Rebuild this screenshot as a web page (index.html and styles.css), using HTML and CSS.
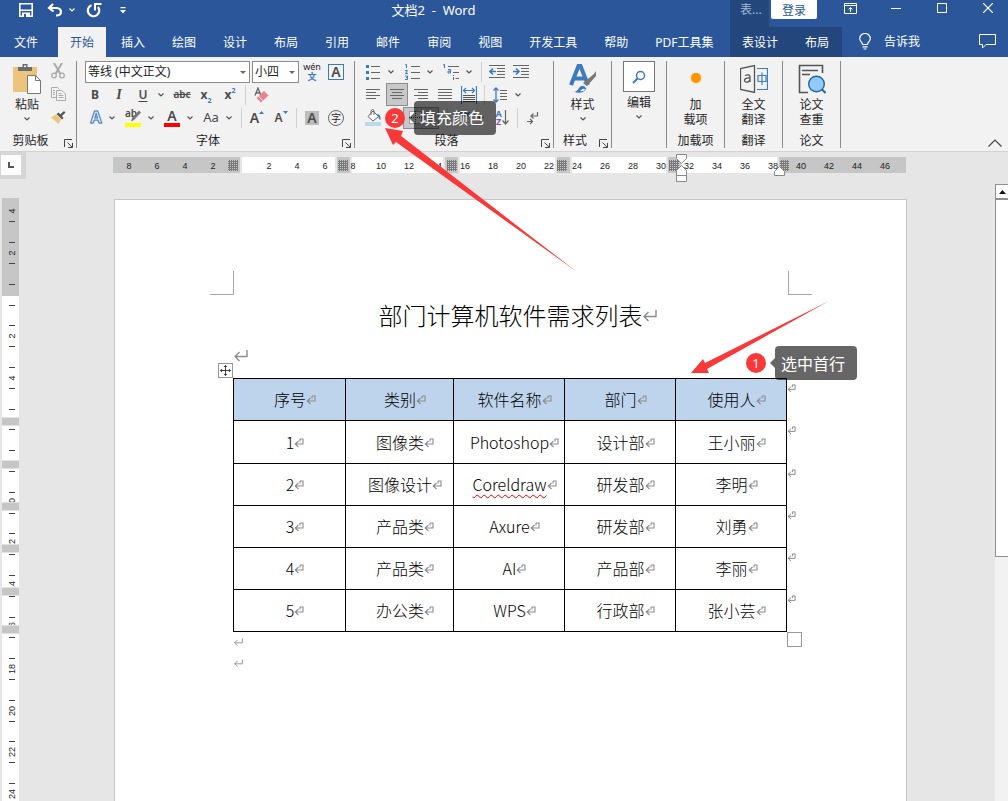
FILE: index.html
```html
<!DOCTYPE html>
<html lang="zh-CN">
<head>
<meta charset="utf-8">
<meta name="viewport" content="width=device-width, initial-scale=1">
<title>文档2 - Word</title>
<link rel="stylesheet" href="styles.css">
</head>
<body>
<svg class="defs" aria-hidden="true">
  <symbol id="caret" viewBox="0 0 6 4"><path d="M.5.5 3 3 5.5.5" fill="none" stroke="currentColor" stroke-width="1.2"/></symbol>
  <symbol id="launcher" viewBox="0 0 9 9"><path d="M.5 8V.5H8M3.500 3.500 8 8M8.500 4v4.500H4" fill="none" stroke="#444"/></symbol>
  <symbol id="para" viewBox="0 0 14 12"><path d="M13 0v6.500H1M5.500 2 1 6.500 5.500 11" fill="none" stroke="#8c8c8c" stroke-width="1.400"/></symbol>
  <symbol id="cell" viewBox="0 0 10 10"><path d="M6 1h3v5H1M4.500 3 1.200 6l3.300 3M6 1v2.500" fill="none" stroke="#8c8c8c" stroke-width="1.100"/></symbol>
</svg>

<header class="titlebar">
  <div class="quick">
    <button class="quick-btn" aria-label="保存"><svg width="16" height="16" viewBox="0 0 16 16"><path d="M1.800 1.800h12.400v12.400H1.800z" fill="none" stroke="#fff" stroke-width="1.600"/><path d="M2 7.500h12v1.500H2zM4 10.500h8V15H4z" fill="#fff"/><path d="M6 12h2v3H6z" fill="#2b579a"/></svg></button>
    <button class="quick-btn undo" aria-label="撤销"><svg width="16" height="14" viewBox="0 0 16 14"><path d="M6 1 2 5l4.500 3.500M2 5h7.500c6 .5 6 7.500-.5 7.500" fill="none" stroke="#fff" stroke-width="2.200"/></svg></button>
    <button class="quick-caret" aria-label="撤销选项"><svg width="6" height="4"><use href="#caret"/></svg></button>
    <button class="quick-btn redo" aria-label="重复"><svg width="16" height="15" viewBox="0 0 16 15"><path d="M5.500 2.200A5.700 5.700 0 1 0 12 4" fill="none" stroke="#fff" stroke-width="2.200"/><path d="M9 7.500V1h6.500" fill="none" stroke="#fff" stroke-width="2"/></svg></button>
    <button class="quick-caret more" aria-label="自定义快速访问工具栏"><svg width="6" height="7" viewBox="0 0 6 7"><path d="M.5 0h5v1.300h-5zM0 3h6L3 6.500z" fill="#fff"/></svg></button>
  </div>
  <h1 class="window-title">文档2  -  Word</h1>
  <div class="title-right">
    <span class="context-title">表...</span>
    <button class="login">登录</button>
    <div class="window-controls">
      <button aria-label="功能区显示选项"><svg width="13" height="11" viewBox="0 0 13 11"><path d="M.5.5h12v10H.5zM.5 2.500h12M6.500 9V4.500M4.500 6.500l2-2 2 2" fill="none" stroke="#fff"/></svg></button>
      <button aria-label="最小化"><svg width="10" height="11" viewBox="0 0 10 11"><path d="M0 5.500h10" stroke="#fff"/></svg></button>
      <button aria-label="最大化"><svg width="10" height="10" viewBox="0 0 10 10"><path d="M.5.5h9v9h-9z" fill="none" stroke="#fff"/></svg></button>
      <button aria-label="关闭"><svg width="10" height="10" viewBox="0 0 10 10"><path d="m0 0 10 10M10 0 0 10" stroke="#fff" stroke-width="1.200"/></svg></button>
    </div>
  </div>
</header>

<nav class="tabs">
  <div class="tab-list">
    <button class="tab file">文件</button>
    <button class="tab active">开始</button>
    <button class="tab">插入</button>
    <button class="tab">绘图</button>
    <button class="tab">设计</button>
    <button class="tab">布局</button>
    <button class="tab">引用</button>
    <button class="tab">邮件</button>
    <button class="tab">审阅</button>
    <button class="tab">视图</button>
    <button class="tab">开发工具</button>
    <button class="tab">帮助</button>
    <button class="tab">PDF工具集</button>
  </div>
  <div class="tabs-right">
    <div class="context-tabs">
      <button class="tab">表设计</button>
      <button class="tab">布局</button>
    </div>
    <button class="tell-me"><svg width="12" height="17" viewBox="0 0 12 17"><path d="M3.500 11.500C3.500 9 .7 8.500.7 5.500a5.300 5 0 0 1 10.600 0c0 3-2.800 3.500-2.800 6zM3.500 13.800h5M4.500 16h3" fill="none" stroke="#fff" stroke-width="1.200"/></svg>告诉我</button>
    <button class="comment" aria-label="批注"><svg width="17" height="15" viewBox="0 0 17 15"><path d="M.5.5h16v10H7L3.500 14v-3.500h-3z" fill="none" stroke="#fff"/></svg></button>
  </div>
</nav>

<section class="ribbon" aria-label="功能区">
  <div class="group clipboard">
    <div class="group-body">
      <button class="big"><span class="big-icon"><svg width="28" height="30" viewBox="0 0 28 30"><path d="M0 3h24v25H0z" fill="#ecc47c"/><path d="M5 7V3h4.500V0h5v3H19v4z" fill="#6d6d6d"/><path d="M11 1.500h2V3h-2z" fill="#fff"/><path d="M14.500 11.500h8l5 5v13h-13z" fill="#fff" stroke="#777"/><path d="M22.500 11.500v5h5" fill="none" stroke="#777"/></svg></span>粘贴<span class="line"><svg width="6" height="4"><use href="#caret"/></svg></span></button>
      <div class="stack">
        <button class="tool" aria-label="剪切"><svg width="14" height="16" viewBox="0 0 14 16"><path d="m3 0 6.500 11M11 0 4.500 11" stroke="#aaa" stroke-width="2"/><circle cx="3" cy="12.500" r="2.300" fill="none" stroke="#aaa" stroke-width="1.300"/><circle cx="11" cy="12.500" r="2.300" fill="none" stroke="#aaa" stroke-width="1.300"/></svg></button>
        <button class="tool" aria-label="复制"><svg width="15" height="14" viewBox="0 0 15 14"><path d="M5 10.500H.5V.5h6l2 2M6 3.500h5l3.500 3.500v6.500H5.500v-10zM2 3.500h2M2 5.500h2M2 7.500h2M7.500 6.500h3M7.500 8.500h5M7.500 10.500h5" fill="none" stroke="#aaa"/></svg></button>
        <button class="tool" aria-label="格式刷"><svg width="16" height="14" viewBox="0 0 16 14"><path d="M1 7.500 6 4.500l5 5L8.500 14z" fill="#ecc47c"/><path d="m6.500 4 2-1.500L13.500 8 12 9.500z" fill="#555"/><path d="m10 4.500 4-3.500 1.500 1.500-4 4z" fill="#555"/></svg></button>
      </div>
    </div>
    <div class="group-foot"><span>剪贴板</span><button aria-label="剪贴板选项"><svg width="9" height="9"><use href="#launcher"/></svg></button></div>
  </div>

  <div class="group font">
    <div class="group-body rows">
      <div class="row fields">
        <label class="field name"><select aria-label="字体"><option>等线 (中文正文)</option></select></label>
        <label class="field size"><select aria-label="字号"><option>小四</option></select></label>
        <button class="tool" aria-label="拼音指南"><span class="pinyin"><span>wén</span><b>文</b></span></button>
        <button class="tool" aria-label="字符边框"><span class="char-border">A</span></button>
      </div>
      <div class="row">
        <button class="tool glyph bold">B</button>
        <button class="tool glyph italic">I</button>
        <button class="tool glyph under">U</button>
        <button class="drop" aria-label="下划线选项"><svg width="6" height="4"><use href="#caret"/></svg></button>
        <button class="tool glyph strike">abc</button>
        <button class="tool glyph script">x<sub>2</sub></button>
        <button class="tool glyph script">x<sup>2</sup></button>
        <i class="sep"></i>
        <button class="tool" aria-label="清除格式"><svg width="15" height="16" viewBox="0 0 15 16"><path d="M1 8.500 4 1l3 7.500M2 6h4" fill="none" stroke="#666" stroke-width="1.300"/><path d="m2.500 11 7.500-7 4.500 4.500-7.500 7z" fill="#e6838f"/><path d="m4.500 9.200 4.300 4.500" stroke="#f3f2f3"/></svg></button>
      </div>
      <div class="row row-effects">
        <button class="tool narrow glyph effect">A</button>
        <button class="drop" aria-label="文本效果选项"><svg width="6" height="4"><use href="#caret"/></svg></button>
        <button class="tool glyph highlight" aria-label="突出显示"><span>ab</span><svg width="17" height="12" viewBox="0 0 17 12"><path d="M6 11.500 7 8l7-7.500 2 2L9 10z" fill="#777"/></svg></button>
        <button class="drop" aria-label="突出显示选项"><svg width="6" height="4"><use href="#caret"/></svg></button>
        <button class="tool glyph color">A</button>
        <button class="drop" aria-label="字体颜色选项"><svg width="6" height="4"><use href="#caret"/></svg></button>
        <button class="tool glyph case">Aa</button>
        <button class="drop" aria-label="更改大小写选项"><svg width="6" height="4"><use href="#caret"/></svg></button>
        <i class="sep"></i>
        <button class="tool glyph grow">A<svg width="5" height="3" viewBox="0 0 5 3"><path d="M0 3h5L2.500 0z" fill="#3b7bbd"/></svg></button>
        <button class="tool glyph shrink">A<svg width="5" height="3" viewBox="0 0 5 3"><path d="M0 0h5L2.500 3z" fill="#3b7bbd"/></svg></button>
        <i class="sep"></i>
        <button class="tool"><span class="shade">A</span></button>
        <button class="tool"><span class="circled">字</span></button>
      </div>
    </div>
    <div class="group-foot"><span>字体</span><button aria-label="字体选项"><svg width="9" height="9"><use href="#launcher"/></svg></button></div>
  </div>

  <div class="group paragraph">
    <div class="group-body rows">
      <div class="row">
        <button class="tool" aria-label="项目符号"><svg width="14" height="16" viewBox="0 0 14 16"><path d="M0 1h3v3H0zM0 7h3v3H0zM0 13h3v3H0z" fill="#3b7bbd"/><path d="M5 2.500h9M5 8.500h9M5 14.500h9" stroke="#666"/></svg></button>
        <button class="drop" aria-label="项目符号选项"><svg width="6" height="4"><use href="#caret"/></svg></button>
        <button class="tool" aria-label="编号"><svg width="15" height="16" viewBox="0 0 15 16"><path d="M0 1l1.500-.5V4M0 6.500h2.500L.5 9.500h2.500M0 12h2.500v3.500H0M1 13.700h1" fill="none" stroke="#3b7bbd"/><path d="M6 2.500h9M6 8.500h9M6 14.500h9" stroke="#666"/></svg></button>
        <button class="drop" aria-label="编号选项"><svg width="6" height="4"><use href="#caret"/></svg></button>
        <button class="tool" aria-label="多级列表"><svg width="18" height="16" viewBox="0 0 18 16"><path d="M1 1l1.500-.5V4M6 5.500h2.500V9H6V7.200h2.500M11.500 11v1M11.500 13v3" fill="none" stroke="#3b7bbd"/><path d="M6 2.500h11M11 8.500h6M13.500 14.500H17" stroke="#666"/></svg></button>
        <button class="drop" aria-label="多级列表选项"><svg width="6" height="4"><use href="#caret"/></svg></button>
        <i class="sep"></i>
        <button class="tool" aria-label="减少缩进量"><svg width="16" height="13" viewBox="0 0 16 13"><path d="M0 .5h16M8 3.500h8M8 6.500h8M8 9.500h8M0 12.500h16" stroke="#666"/><path d="M7 6.500H1M4 3.500l-3 3 3 3" fill="none" stroke="#3b7bbd" stroke-width="1.600"/></svg></button>
        <button class="tool" aria-label="增加缩进量"><svg width="16" height="13" viewBox="0 0 16 13"><path d="M0 .5h16M8 3.500h8M8 6.500h8M8 9.500h8M0 12.500h16" stroke="#666"/><path d="M0 6.500h6M3 3.500l3 3-3 3" fill="none" stroke="#3b7bbd" stroke-width="1.600"/></svg></button>
      </div>
      <div class="row">
        <button class="tool" aria-label="左对齐"><svg width="14" height="11" viewBox="0 0 14 11"><path d="M0 .5h14M0 3.500h10M0 6.500h14M0 9.500h10" stroke="#666"/></svg></button>
        <button class="tool selected" aria-label="居中"><svg width="14" height="11" viewBox="0 0 14 11"><path d="M0 .5h14M2 3.500h10M0 6.500h14M2 9.500h10" stroke="#666"/></svg></button>
        <button class="tool" aria-label="右对齐"><svg width="14" height="11" viewBox="0 0 14 11"><path d="M0 .5h14M4 3.500h10M0 6.500h14M4 9.500h10" stroke="#666"/></svg></button>
        <button class="tool" aria-label="两端对齐"><svg width="14" height="11" viewBox="0 0 14 11"><path d="M0 .5h14M0 3.500h14M0 6.500h14M0 9.500h14" stroke="#666"/></svg></button>
        <button class="tool" aria-label="分散对齐"><svg width="16" height="18" viewBox="0 0 16 18"><path d="M.5 0v18M15.500 0v18M2.500 4.500h11M5 2 2.500 4.500 5 7M11 2l2.500 2.500L11 7" fill="none" stroke="#3b7bbd" stroke-width="1.200"/><path d="M2 9.500h12M2 11.500h12M2 13.500h12M2 15.500h12" stroke="#555"/></svg></button>
        <i class="sep"></i>
        <button class="tool" aria-label="行距"><svg width="15" height="16" viewBox="0 0 15 16"><path d="M3 1v14M.5 3.500 3 1l2.500 2.500M.5 12.500 3 15l2.500-2.500" fill="none" stroke="#3b7bbd" stroke-width="1.300"/><path d="M7 3.500h7M7 6.500h7M7 9.500h7M7 12.500h7" stroke="#666"/></svg></button>
        <button class="drop" aria-label="行距选项"><svg width="6" height="4"><use href="#caret"/></svg></button>
      </div>
      <div class="row">
        <button class="tool" aria-label="底纹"><svg width="17" height="18" viewBox="0 0 17 18"><path d="M0 13h16v4H0z" fill="#bdd7ee"/><path d="m8 2 5.500 5.500-5.500 4.500L3 7.500zM6 6V1.500Q8-.5 9 1.500V6" fill="#fff" stroke="#666"/><path d="M12 5q4 0 3.500 6-2-1-2.500-4z" fill="#3b7bbd"/></svg></button>
        <button class="drop" aria-label="底纹选项"><svg width="6" height="4"><use href="#caret"/></svg></button>
        <div class="split">
          <button class="tool" aria-label="边框"><svg width="13" height="13" viewBox="0 0 13 13"><path d="M0 0h13v13H0z" fill="#fff"/><path d="M.5.5h12v12H.5zM6.500 0v13M0 6.500h13" fill="none" stroke="#444" stroke-dasharray="1 1"/></svg></button>
          <button class="drop" aria-label="边框选项"><svg width="6" height="4"><use href="#caret"/></svg></button>
        </div>
        <i class="sep"></i>
        <button class="tool" aria-label="中文版式"><svg width="16" height="14" viewBox="0 0 16 14"><path d="M1 1.500h6M1 4.500h6M9 1l6 5M15 1 9 6" fill="none" stroke="#3b7bbd" stroke-width="1.400"/></svg></button>
        <button class="drop" aria-label="中文版式选项"><svg width="6" height="4"><use href="#caret"/></svg></button>
        <button class="tool" aria-label="排序"><span class="sort"><b>A</b><b>Z</b></span><svg width="7" height="15" viewBox="0 0 7 15"><path d="M3.500 0v14M.5 10.500l3 3.500 3-3.500" fill="none" stroke="#666" stroke-width="1.200"/></svg></button>
        <i class="sep"></i>
        <button class="tool" aria-label="显示编辑标记"><svg width="12" height="14" viewBox="0 0 12 14"><path d="M10.500 1v4H4M6.500 2.500 4 5l2.500 2.500M0 10.500h5.500M3 8l2.500 2.500L3 13" fill="none" stroke="#666" stroke-width="1.200"/></svg></button>
      </div>
    </div>
    <div class="group-foot"><span>段落</span><button aria-label="段落选项"><svg width="9" height="9"><use href="#launcher"/></svg></button></div>
    <svg class="arrow arrow-fill" width="194" height="146" viewBox="0 0 194 146" aria-hidden="true"><path d="m1 0 18 3-2 5 176 136L12 14l-3 3z" fill="#f93939"/></svg>
    <span class="badge badge-fill">2</span>
    <div class="tip tip-fill">填充颜色</div>
  </div>

  <div class="group">
    <div class="group-body">
      <button class="big"><span class="big-icon"><svg width="28" height="30" viewBox="0 0 28 30"><path d="M2 21 9.500 2h2L19 21M5 14.500h11" fill="none" stroke="#3b7bbd" stroke-width="4"/><path d="m14 19 11-9 2-3v5l-9 10z" fill="#777"/><path d="M4 28q5-1 6-5 3-3 6-1 3 3 0 5-4 4-12 1z" fill="#3b7bbd" stroke="#f3f2f3"/><path d="M11 27q3-3 5-2-1 3-5 2z" fill="#fff"/></svg></span>样式<span class="line"><svg width="6" height="4"><use href="#caret"/></svg></span></button>
    </div>
    <div class="group-foot"><span>样式</span><button aria-label="样式选项"><svg width="9" height="9"><use href="#launcher"/></svg></button></div>
  </div>

  <div class="group edit">
    <div class="group-body">
      <button class="big"><span class="edit-box"><svg width="14" height="14" viewBox="0 0 14 14"><circle cx="8.500" cy="5.500" r="4" fill="none" stroke="#3b7bbd" stroke-width="1.500"/><path d="M5.500 8.500 1 13" stroke="#3b7bbd" stroke-width="2"/></svg></span>编辑<span class="line"><svg width="6" height="4"><use href="#caret"/></svg></span></button>
    </div>
  </div>

  <div class="group plain">
    <div class="group-body">
      <button class="big"><span class="big-icon dot-icon"><i class="dot"></i></span>加<br>载项</button>
    </div>
    <div class="group-foot"><span>加载项</span></div>
  </div>

  <div class="group plain">
    <div class="group-body">
      <button class="big"><span class="big-icon"><svg width="28" height="28" viewBox="0 0 28 28"><path d="M14.500.5.5 3.500v21l14 3zM5 10.500q5-2 5 1.500v5M10 13q-5-.5-5.500 2 0 2.500 3 2 2.500-.5 2.500-3" fill="none" stroke="#555" stroke-width="1.300"/><path d="M17 3.500h10.500v21H17M18 10.500h8v6h-8zM22 7.500V20" fill="none" stroke="#3b7bd0" stroke-width="1.200"/></svg></span>全文<br>翻译</button>
    </div>
    <div class="group-foot"><span>翻译</span></div>
  </div>

  <div class="group plain">
    <div class="group-body">
      <button class="big"><span class="big-icon"><svg width="29" height="30" viewBox="0 0 29 30"><path d="M25.500 9V1.500H2.500v27H11M5 6.500h16M5 10.500h8" fill="none" stroke="#555" stroke-width="1.600"/><circle cx="19.500" cy="20" r="7.800" fill="#93c8f8" stroke="#1d6b9d" stroke-width="1.400"/><path d="m25 25.500 3.500 3.500" stroke="#1d6b9d" stroke-width="2"/></svg></span>论文<br>查重</button>
    </div>
    <div class="group-foot"><span>论文</span></div>
  </div>

  <button class="collapse" aria-label="折叠功能区"><svg width="14" height="8" viewBox="0 0 14 8"><path d="m.5 7.500 6.500-6.500 6.500 6.500" fill="none" stroke="#444" stroke-width="1.200"/></svg></button>
</section>

<main class="workspace">
  <div class="left-rail">
    <div class="corner"><button aria-label="制表符"><svg width="6" height="6" viewBox="0 0 6 6"><path d="M1 0v5h5" fill="none" stroke="#555" stroke-width="2"/></svg></button></div>
    <svg class="ruler-v" width="17" height="640" viewBox="2 198 17 640" aria-hidden="true">
      <path d="M2 198h17v640H2z" fill="#fff"/>
      <path d="M2 198h17v98H2z" fill="#c6c6c6"/>
      <path d="M9 221.500h6M9 242.500h6M9 263.500h6M9 284.500h6M9 305.500h6M9 325.500h6M9 346.500h6M9 367.500h6M9 388.500h6M9 409.500h6M9 429.500h6M9 450.500h6M9 471.500h6M9 492.500h6M9 513.500h6M9 533.500h6M9 554.500h6M9 575.500h6M9 596.500h6M9 617.500h6M9 637.500h6M9 658.500h6M9 679.500h6M9 700.500h6M9 721.500h6M9 741.500h6M9 762.500h6M9 783.500h6" stroke="#444"/>
      <g class="ruler-text">
        <text transform="translate(15 211) rotate(-90)">4</text>
        <text transform="translate(15 253) rotate(-90)">2</text>
        <text transform="translate(15 336) rotate(-90)">2</text>
        <text transform="translate(15 378) rotate(-90)">4</text>
        <text transform="translate(15 462) rotate(-90)">8</text>
        <text transform="translate(15 503) rotate(-90)">10</text>
        <text transform="translate(15 544) rotate(-90)">12</text>
        <text transform="translate(15 586) rotate(-90)">14</text>
        <text transform="translate(15 627) rotate(-90)">16</text>
        <text transform="translate(15 669) rotate(-90)">18</text>
        <text transform="translate(15 711) rotate(-90)">20</text>
        <text transform="translate(15 752) rotate(-90)">22</text>
        <text transform="translate(15 794) rotate(-90)">24</text>
      </g>
      <path d="M2 421.500h17M2 464.500h17M2 506.500h17M2 548.500h17M2 591.500h17M2 629.500h17" stroke="#e2e2e2" stroke-width="9"/>
      <path d="M2 421.500h17M2 464.500h17M2 506.500h17M2 548.500h17M2 591.500h17M2 629.500h17" stroke="#c6c6c6" stroke-width="7"/>
    </svg>
  </div>

  <div class="canvas">
    <svg class="ruler-h" width="793" height="42" viewBox="114 157 793 42" aria-hidden="true">
      <defs><pattern id="mesh" width="2" height="2" patternUnits="userSpaceOnUse"><path d="M0 0h2v2H0z" fill="#777"/><path d="M0 0h1v1H0z" fill="#ccc"/></pattern></defs>
      <path d="M113 157h127v16H113zM337 157h13v16h-13zM445 157h13v16h-13zM557 157h13v16h-13zM668 157h13v16h-13zM779 157h127v16H779z" fill="#c6c6c6"/>
      <path d="M242 157h93v16h-93zM352 157h91v16h-91zM460 157h95v16h-95zM572 157h94v16h-94zM681 157h96v16h-96z" fill="#fff"/>
      <path d="M228 160h10v11h-10zM338 160h10v11h-10zM447 160h10v11h-10zM557 160h10v11h-10zM669 160h10v11h-10zM780 160h9v11h-9z" fill="url(#mesh)"/>
      <g class="ruler-text">
        <text x="129" y="169">8</text><text x="157" y="169">6</text><text x="185" y="169">4</text><text x="213" y="169">2</text>
        <text x="269" y="169">2</text><text x="297" y="169">4</text><text x="325" y="169">6</text><text x="353" y="169">8</text>
        <text x="381" y="169">10</text><text x="409" y="169">12</text><text x="437" y="169">14</text><text x="465" y="169">16</text>
        <text x="493" y="169">18</text><text x="521" y="169">20</text><text x="549" y="169">22</text><text x="577" y="169">24</text>
        <text x="605" y="169">26</text><text x="633" y="169">28</text><text x="661" y="169">30</text><text x="689" y="169">32</text>
        <text x="717" y="169">34</text><text x="745" y="169">36</text><text x="773" y="169">38</text><text x="801" y="169">40</text>
        <text x="829" y="169">42</text><text x="857" y="169">44</text><text x="885" y="169">46</text>
      </g>
      <path d="M676.500 154.500h10v4l-5 5-5-5zM676.500 175.500v-5l5-5 5 5v5zM676.500 175.500h10v6h-10zM774.500 175.500v-4l5-5 5 5v4z" fill="#fff" stroke="#888"/>
    </svg>

    <article class="page">
      <div class="crop"><i></i><i></i></div>
      <h2 class="doc-title">部门计算机软件需求列表<svg class="hang" width="14" height="12"><use href="#para"/></svg></h2>
      <p class="blank"><svg width="14" height="12"><use href="#para"/></svg></p>
      <div class="table-wrap">
        <button class="handle" aria-label="移动表格"><svg width="11" height="11" viewBox="0 0 11 11"><path d="M5.500 0v11M0 5.500h11M4 2l1.500-1.500L7 2M4 9l1.500 1.500L7 9M2 4 .5 5.500 2 7M9 4l1.500 1.500L9 7" fill="none" stroke="#444"/></svg></button>
        <table>
          <colgroup><col class="c1"><col class="c2"><col class="c3"><col class="c3"><col class="c3"></colgroup>
          <thead>
            <tr><th>序号<svg class="hang"><use href="#cell"/></svg></th><th>类别<svg class="hang"><use href="#cell"/></svg></th><th>软件名称<svg class="hang"><use href="#cell"/></svg></th><th>部门<svg class="hang"><use href="#cell"/></svg></th><th>使用人<svg class="hang"><use href="#cell"/></svg><svg class="row-end"><use href="#cell"/></svg></th></tr>
          </thead>
          <tbody>
            <tr class="first"><td>1<svg class="hang"><use href="#cell"/></svg></td><td>图像类<svg class="hang"><use href="#cell"/></svg></td><td>Photoshop<svg class="hang"><use href="#cell"/></svg></td><td>设计部<svg class="hang"><use href="#cell"/></svg></td><td>王小丽<svg class="hang"><use href="#cell"/></svg><svg class="row-end"><use href="#cell"/></svg></td></tr>
            <tr><td>2<svg class="hang"><use href="#cell"/></svg></td><td>图像设计<svg class="hang"><use href="#cell"/></svg></td><td><span class="typo">Coreldraw</span><svg class="hang"><use href="#cell"/></svg></td><td>研发部<svg class="hang"><use href="#cell"/></svg></td><td>李明<svg class="hang"><use href="#cell"/></svg><svg class="row-end"><use href="#cell"/></svg></td></tr>
            <tr><td>3<svg class="hang"><use href="#cell"/></svg></td><td>产品类<svg class="hang"><use href="#cell"/></svg></td><td>Axure<svg class="hang"><use href="#cell"/></svg></td><td>研发部<svg class="hang"><use href="#cell"/></svg></td><td>刘勇<svg class="hang"><use href="#cell"/></svg><svg class="row-end"><use href="#cell"/></svg></td></tr>
            <tr><td>4<svg class="hang"><use href="#cell"/></svg></td><td>产品类<svg class="hang"><use href="#cell"/></svg></td><td>AI<svg class="hang"><use href="#cell"/></svg></td><td>产品部<svg class="hang"><use href="#cell"/></svg></td><td>李丽<svg class="hang"><use href="#cell"/></svg><svg class="row-end"><use href="#cell"/></svg></td></tr>
            <tr><td>5<svg class="hang"><use href="#cell"/></svg></td><td>办公类<svg class="hang"><use href="#cell"/></svg></td><td>WPS<svg class="hang"><use href="#cell"/></svg></td><td>行政部<svg class="hang"><use href="#cell"/></svg></td><td>张小芸<svg class="hang"><use href="#cell"/></svg><svg class="row-end"><use href="#cell"/></svg></td></tr>
          </tbody>
        </table>
        <i class="resize"></i>
        <svg class="arrow arrow-row" width="140" height="74" viewBox="0 0 140 74" aria-hidden="true"><path d="M1 72 13 58l2 4L139 0 17 68l2 4z" fill="#f93939"/></svg>
        <span class="badge badge-row">1</span>
        <div class="tip tip-row">选中首行</div>
      </div>
      <p class="after"><svg width="9" height="9"><use href="#para"/></svg></p>
      <p class="after"><svg width="9" height="9"><use href="#para"/></svg></p>
    </article>
  </div>

  <div class="scroll">
    <button class="scroll-up" aria-label="向上滚动"><svg width="7" height="4" viewBox="0 0 7 4"><path d="M0 4h7L3.500 0z" fill="#111"/></svg></button>
    <div class="thumb"></div>
  </div>
</main>
</body>
</html>
```
FILE: styles.css
```css
* { box-sizing: border-box; }

body {
  margin: 0;
  height: 100vh;
  display: flex;
  flex-direction: column;
  overflow: hidden;
  font: 12px/15px "Noto Sans", "Noto Sans CJK SC", sans-serif;
  color: #262626;
  background: #e6e6e6;
}

button {
  margin: 0;
  padding: 0;
  border: 0;
  background: none;
  color: inherit;
  font: inherit;
}

svg { display: block; flex: none; }
.defs { position: absolute; width: 0; height: 0; }

/* Title bar */
.titlebar {
  flex: none;
  display: flex;
  height: 27px;
  background: #2b579a;
  color: #fff;
}
.quick {
  flex: none;
  display: flex;
  align-items: center;
  width: 137px;
  height: 20px;
  padding-left: 18px;
}
.quick-btn { width: 16px; }
.undo { margin-left: 13px; }
.redo { margin-left: 11px; }
.quick-caret { width: 6px; margin-left: 6px; }
.quick-caret.more { margin-left: 18px; }
.window-title {
  flex: 1;
  margin: 0;
  font: inherit;
  font-size: 13px;
  line-height: 20px;
  text-align: center;
  white-space: pre;
}
.title-right { flex: none; display: flex; width: 278px; }
.context-title {
  width: 39px;
  padding-left: 10px;
  line-height: 20px;
  background: #23477d;
  color: #a3b6d3;
}
.login {
  width: 46px;
  height: 19px;
  margin-left: 2px;
  border-radius: 0 0 2px 2px;
  background: #fff;
  color: #2b579a;
  line-height: 21px;
}
.window-controls {
  display: flex;
  gap: 6px;
  height: 16px;
  margin-left: auto;
}
.window-controls button {
  width: 40px;
  display: flex;
  align-items: center;
  justify-content: center;
}

/* Tabs */
.tabs {
  flex: none;
  display: flex;
  height: 30px;
  background: #2b579a;
  color: #fff;
}
.tab-list { flex: 1; display: flex; gap: 3px; padding-left: 2px; min-width: 0; }
.tab { padding: 0 12px; white-space: nowrap; }
.tab.file { margin-right: 5px; }
.tab.active { background: #f3f2f3; color: #2b579a; }
.tabs-right { flex: none; display: flex; width: 278px; }
.context-tabs { display: flex; gap: 3px; width: 112px; background: #23477d; }
.tell-me { display: flex; align-items: center; gap: 13px; margin: 0 0 2px 17px; }
.comment { margin: 0 12px 1px auto; }

/* Ribbon */
.ribbon {
  flex: none;
  display: flex;
  height: 95px;
  padding: 4px 0;
  background: #f3f2f3;
  border-bottom: 1px solid #d2d2d2;
}
.group {
  position: relative;
  flex: none;
  display: flex;
  flex-direction: column;
  width: 58px;
  height: 87px;
  border-right: 1px solid #8a8a8a;
}
.clipboard { width: 77px; }
.font { width: 278px; }
.paragraph { width: 199px; }
.edit { width: 55px; }
.group-body { display: flex; justify-content: center; height: 68px; }
.clipboard .group-body { justify-content: flex-start; padding-left: 5px; }
.group-body.rows { flex-direction: column; justify-content: flex-start; margin-top: -1px; height: 69px; }
.group-foot { display: flex; align-items: flex-end; height: 19px; padding-right: 1px; }
.group-foot span { flex: 1; padding-right: 3px; text-align: center; }
.group-foot button { width: 11px; }
.plain .group-foot { padding: 0; }
.plain .group-foot span { padding: 0; }

.big {
  display: flex;
  flex-direction: column;
  align-items: center;
  width: 44px;
  line-height: 15px;
}
.big br { display: block; }
.big-icon { display: flex; align-items: center; justify-content: center; height: 36px; padding: 0 0 1px; }
.dot-icon { padding-bottom: 3px; }
.line { display: flex; align-items: center; justify-content: center; height: 14px; color: #555; }
.edit-box {
  display: flex;
  align-items: center;
  justify-content: center;
  width: 32px;
  height: 31px;
  margin-bottom: 3px;
  border: 1px solid #777;
  background: #fff;
}
.dot { width: 10px; height: 10px; border-radius: 5px; background: #ff9500; box-shadow: 0 0 2px #ffb95c; }
.stack { display: flex; flex-direction: column; gap: 1px; margin: -1px 0 0 -3px; }

.row { display: flex; align-items: center; height: 23px; padding-left: 6px; }
.paragraph .row { padding-left: 6px; }
.row-effects { padding-left: 9px; }
.row.fields { padding-left: 8px; }
.tool {
  position: relative;
  flex: none;
  display: flex;
  align-items: center;
  justify-content: center;
  width: 24px;
  height: 22px;
}
.narrow { width: 20px; }
.drop { flex: none; display: flex; justify-content: center; width: 12px; margin-right: 3px; color: #555; }
.sep { flex: none; width: 1px; height: 20px; margin: 0 3px; background: #d0d0d0; }
.selected { margin: 0 1px; width: 22px; height: 23px; border: 1px solid #8c8c8c; background: #c8c8c8; }
.split { display: flex; align-items: center; margin: 0 5px 0 3px; border: 1px solid #8c8c8c; background: #c8c8c8; }
.split .tool { width: 22px; height: 20px; }
.split .drop { margin: 0; }

.field { position: relative; height: 22px; margin-right: 2px; }
.field.name { width: 165px; }
.field.size { width: 47px; margin-right: 1px; }
.field select {
  appearance: none;
  width: 100%;
  height: 22px;
  padding: 0 2px;
  border: 1px solid #8c8c8c;
  border-radius: 0;
  background: #fff;
  color: #222;
  font: inherit;
}
.field::after {
  content: "";
  position: absolute;
  right: 4px;
  top: 10px;
  border: 3px solid transparent;
  border-top-color: #666;
  border-bottom: 0;
}

.glyph { color: #4a4a4a; }
.bold { font-weight: 700; }
.italic { font-family: "Liberation Serif", serif; font-style: italic; font-weight: 700; font-size: 14px; }
.under { font-weight: 600; text-decoration: underline; text-underline-offset: 2px; }
.strike { font-size: 10px; font-weight: 600; text-decoration: line-through; }
.script { font-weight: 700; }
.script sub, .script sup { color: #3b7bbd; font-size: 7px; line-height: 7px; }
.script sub { align-self: flex-end; margin-bottom: 2px; }
.script sup { align-self: flex-start; margin-top: 3px; }
.pinyin { display: flex; flex-direction: column; align-items: center; gap: 1px; font-size: 9px; line-height: 9px; }
.pinyin b { color: #3b7bbd; font-size: 9px; line-height: 10px; }
.char-border {
  width: 16px;
  height: 16px;
  border: 1px solid #3b7bbd;
  font-size: 14px;
  font-weight: 600;
  line-height: 14px;
  color: #4a4a4a;
}
.effect { color: #fff; font-size: 16px; font-weight: 700; -webkit-text-stroke: 1px #3b7bbd; text-shadow: 0 0 2px #8fb8e0; }
.highlight { flex-direction: column; justify-content: flex-start; }
.highlight::after, .color::after {
  content: "";
  position: absolute;
  left: 4px;
  bottom: 2px;
  width: 16px;
  height: 4px;
  background: #ff0;
}
.highlight span { position: absolute; left: 4px; top: 0; font-size: 10px; font-weight: 600; line-height: 12px; }
.highlight svg { position: absolute; left: 4px; top: 3px; }
.color { font-size: 14px; font-weight: 600; line-height: 17px; align-items: flex-start; }
.color::after { background: #f00; }
.case { font-size: 13px; }
.grow, .shrink { font-size: 14px; font-weight: 600; }
.shrink { font-size: 12px; }
.grow svg, .shrink svg { align-self: flex-start; margin-top: 4px; }
.shade { width: 14px; background: #bdbdbd; font-size: 14px; font-weight: 600; line-height: 14px; color: #4a4a4a; }
.circled { width: 16px; height: 16px; border: 1px solid #666; border-radius: 8px; font-size: 10px; line-height: 14px; }
.sort { display: flex; flex-direction: column; font-size: 9px; line-height: 8px; color: #3b7bbd; }
.sort b + b { color: #8b4fb0; }
.collapse { align-self: flex-end; margin: 0 6px 0 auto; }

/* Callouts */
.arrow, .badge, .tip { position: absolute; z-index: 2; }
.badge {
  width: 20px;
  height: 20px;
  border-radius: 10px;
  background: #f93939;
  color: #fff;
  font-family: "Noto Sans", sans-serif;
  font-size: 13px;
  font-weight: 400;
  line-height: 20px;
  text-align: center;
}
.tip {
  padding: 0 6px;
  border-radius: 4px;
  background: rgba(0, 0, 0, .6);
  color: #fff;
  font-size: 16px;
  font-weight: 400;
  line-height: 34px;
  white-space: nowrap;
  width: 82px;
}
.tip::before {
  content: "";
  position: absolute;
  left: -5px;
  top: 12px;
  border: 5px solid transparent;
  border-right-color: rgba(0, 0, 0, .6);
  border-left: 0;
}
.arrow-fill { left: 29px; top: 67px; }
.badge-fill { left: 30px; top: 47px; }
.tip-fill { left: 59px; top: 40px; }
.arrow-row { left: 457px; top: -77px; }
.badge-row { left: 513px; top: -25px; }
.tip-row { left: 542px; top: -32px; }

/* Workspace */
.workspace {
  flex: 1;
  display: grid;
  grid-template-columns: 26px minmax(0, 1fr) 13px;
  min-height: 0;
  overflow: hidden;
}
.left-rail { overflow: hidden; }
.corner { height: 27px; padding: 3px 1px; background: #d6d6d6; }
.corner button { display: flex; align-items: center; justify-content: center; width: 20px; height: 20px; background: #fcfcfc; }
.ruler-v { margin: 19px 0 0 2px; }
.ruler-text { font: 9px "Liberation Sans", sans-serif; fill: #222; text-anchor: middle; }
.canvas { padding-top: 5px; }
.ruler-h { margin: 0 auto; overflow: visible; position: relative; }

.page {
  width: 793px;
  min-height: 700px;
  margin: 0 auto;
  padding: 71px 119px;
  border: 1px solid #c6c6c6;
  background: #fff;
  color: #000;
  font-family: "Noto Sans CJK SC", sans-serif;
  font-weight: 300;
}
.crop { display: flex; justify-content: space-between; margin: 0 -25px 0 -24px; }
.crop i { width: 24px; height: 24px; border: 1px solid #a6a6a6; border-top: 0; border-left: 0; }
.crop i + i { border-right: 0; border-left: 1px solid #a6a6a6; }
.doc-title { margin: 0; font-size: 24px; font-weight: 300; line-height: 39px; text-align: center; }
.hang { display: inline-block; width: 10px; height: 10px; margin-right: -10px; vertical-align: 1px; }
.doc-title .hang { width: 14px; height: 12px; margin-right: -14px; vertical-align: 3px; }
.blank { display: flex; align-items: center; height: 44px; margin: 0; }
.table-wrap { position: relative; margin-left: -1px; }
table { width: 100%; border-collapse: collapse; table-layout: fixed; font-size: 16px; line-height: 24px; }
.c1 { width: 112px; }
.c2 { width: 108px; }
.c3 { width: 111px; }
th, td {
  position: relative;
  height: 42px;
  padding: 0 0 1px 1px;
  border: 1px solid #000;
  font-weight: 300;
  text-align: center;
}
.first td { height: 43px; }
th { background: #bdd4ec; }
.row-end { position: absolute; right: -10px; top: 5px; width: 9px; height: 9px; }
.typo { text-decoration: underline wavy #e00 1px; text-underline-offset: 3px; text-decoration-skip-ink: none; }
.handle {
  position: absolute;
  left: -15px;
  top: -15px;
  display: flex;
  align-items: center;
  justify-content: center;
  width: 15px;
  height: 15px;
  border: 1px solid #999;
  background: #fff;
}
.resize { position: absolute; right: -15px; bottom: -15px; width: 15px; height: 15px; border: 1px solid #999; background: #fff; }
.after { display: flex; align-items: center; height: 21px; margin: 0; }

/* Scroll bar */
.scroll { display: flex; flex-direction: column; margin-top: 32px; background: #f2f2f2; }
.scroll-up {
  display: flex;
  align-items: center;
  justify-content: center;
  height: 15px;
  border: 1px solid #8f8f8f;
  border-right: 0;
  background: #fff;
}
.thumb { height: 358px; border: 1px solid #8f8f8f; border-right: 0; background: #fff; }
```
